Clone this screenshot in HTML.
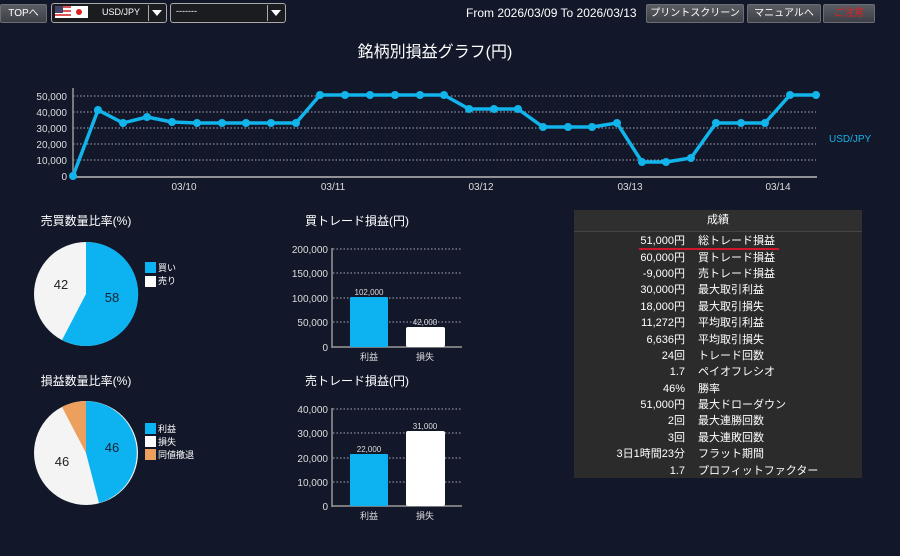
<!DOCTYPE html>
<html><head><meta charset="utf-8"><style>
body{margin:0;width:900px;height:556px;background:#121829;overflow:hidden;font-family:"Liberation Sans","Noto Sans CJK JP",sans-serif;color:#fff;position:relative}
.btn{position:absolute;top:4px;height:17px;background:linear-gradient(#5a5d63,#3d4046);border:1px solid #6a6d72;border-radius:2px;font-size:10px;line-height:17px;text-align:center;color:#fff}
.sel{position:absolute;top:3px;height:18px;border:1px solid #aaa;border-radius:3px;background:#1a1c20}
.arr{position:absolute;right:1px;top:1px;width:16px;height:16px;background:#1a1c20;border-left:1px solid #aaa}
.arr:after{content:"";position:absolute;left:3px;top:5px;border-left:5px solid transparent;border-right:5px solid transparent;border-top:6px solid #fff}
table{border-collapse:collapse}
td{height:16.4px;padding:0;line-height:16px;color:#fff}td:first-child{width:111px;text-align:right;padding-right:13px}
</style></head><body>
<div class="btn" style="left:0;width:45px">TOPへ</div>
<div class="sel" style="left:51px;width:114px">
 <div style="position:absolute;left:3px;top:2px;width:16px;height:12px;background:repeating-linear-gradient(#d55 0 2px,#fff 2px 4px)"><div style="width:8px;height:7px;background:#446"></div></div>
 <div style="position:absolute;left:19px;top:2px;width:17px;height:12px;background:#fff"><div style="position:absolute;left:5px;top:3px;width:6px;height:6px;border-radius:50%;background:#d22"></div></div>
 <div style="position:absolute;left:50px;top:3px;font-size:9px">USD/JPY</div>
 <div class="arr"></div></div>
<div class="sel" style="left:170px;width:114px"><div style="position:absolute;left:5px;top:2px;font-size:9px">-------</div><div class="arr"></div></div>
<div style="position:absolute;left:466px;top:6px;font-size:12px">From 2026/03/09 To 2026/03/13</div>
<div class="btn" style="left:646px;width:96px">プリントスクリーン</div>
<div class="btn" style="left:747px;width:72px">マニュアルへ</div>
<div class="btn" style="left:823px;width:50px;color:#e02020">ご注意</div>
<div style="position:absolute;left:0;width:870px;top:38px;text-align:center;font-size:16px">銘柄別損益グラフ(円)</div>

<svg width="900" height="556" style="position:absolute;left:0;top:0" font-family="Liberation Sans,Noto Sans CJK JP,sans-serif">
<g stroke="#aab" stroke-dasharray="1.5,2" stroke-width="1">
<line x1="73" x2="816" y1="96" y2="96"/><line x1="73" x2="816" y1="112" y2="112"/><line x1="73" x2="816" y1="128" y2="128"/><line x1="73" x2="816" y1="144" y2="144"/><line x1="73" x2="816" y1="160" y2="160"/>
</g>
<line x1="73" y1="88" x2="73" y2="177" stroke="#999" stroke-width="1.5"/>
<line x1="73" y1="177" x2="817" y2="177" stroke="#bbb" stroke-width="1.5"/>
<g fill="#ddd" font-size="10" text-anchor="end"><text x="67" y="100">50,000</text><text x="67" y="116">40,000</text><text x="67" y="132">30,000</text><text x="67" y="148">20,000</text><text x="67" y="164">10,000</text><text x="67" y="180">0</text></g>
<g fill="#ddd" font-size="10" text-anchor="middle"><text x="184" y="190">03/10</text><text x="333" y="190">03/11</text><text x="481" y="190">03/12</text><text x="630" y="190">03/13</text><text x="778" y="190">03/14</text></g>
<text x="829" y="142" fill="#19b1e8" font-size="10">USD/JPY</text>
<polyline fill="none" stroke="#12b4ec" stroke-width="3.5" stroke-linejoin="round" points="73,176 98,110 123,123 147,117 172,122 197,123 222,123 246,123 271,123 296,123 320,95 345,95 370,95 395,95 420,95 444,95 469,109 494,109 518,109 543,127 568,127 592,127 617,123 642,162 666,162 691,158 716,123 741,123 765,123 790,95 816,95"/>
<g fill="#12b4ec"><circle cx="73" cy="176" r="4"/><circle cx="98" cy="110" r="4"/><circle cx="123" cy="123" r="4"/><circle cx="147" cy="117" r="4"/><circle cx="172" cy="122" r="4"/><circle cx="197" cy="123" r="4"/><circle cx="222" cy="123" r="4"/><circle cx="246" cy="123" r="4"/><circle cx="271" cy="123" r="4"/><circle cx="296" cy="123" r="4"/><circle cx="320" cy="95" r="4"/><circle cx="345" cy="95" r="4"/><circle cx="370" cy="95" r="4"/><circle cx="395" cy="95" r="4"/><circle cx="420" cy="95" r="4"/><circle cx="444" cy="95" r="4"/><circle cx="469" cy="109" r="4"/><circle cx="494" cy="109" r="4"/><circle cx="518" cy="109" r="4"/><circle cx="543" cy="127" r="4"/><circle cx="568" cy="127" r="4"/><circle cx="592" cy="127" r="4"/><circle cx="617" cy="123" r="4"/><circle cx="642" cy="162" r="4"/><circle cx="666" cy="162" r="4"/><circle cx="691" cy="158" r="4"/><circle cx="716" cy="123" r="4"/><circle cx="741" cy="123" r="4"/><circle cx="765" cy="123" r="4"/><circle cx="790" cy="95" r="4"/><circle cx="816" cy="95" r="4"/></g>

<g font-size="12" text-anchor="middle" fill="#fff"><text x="86" y="225">売買数量比率(%)</text><text x="86" y="385">損益数量比率(%)</text>
<text x="357" y="225">買トレード損益(円)</text><text x="357" y="385">売トレード損益(円)</text></g>
<circle cx="86" cy="294" r="52" fill="#f4f4f4"/>
<path d="M86,294 L86,242 A52,52 0 1,1 62,340 Z" fill="#0db2f0"/>
<text x="112" y="302" font-size="13" fill="#123" text-anchor="middle">58</text>
<text x="61" y="289" font-size="13" fill="#222" text-anchor="middle">42</text>
<rect x="145" y="262" width="11" height="11" fill="#0db2f0"/><rect x="145" y="276" width="11" height="11" fill="#fff"/>
<g font-size="9" fill="#fff"><text x="158" y="271">買い</text><text x="158" y="284">売り</text></g>
<circle cx="86" cy="453" r="52" fill="#f4f4f4"/>
<path d="M86,453 L86,401 A52,52 0 0,1 99,503 Z" fill="#0db2f0"/>
<path d="M86,453 L86,401 A52,52 0 0,0 62,407 Z" fill="#eda05e"/>
<text x="112" y="452" font-size="13" fill="#123" text-anchor="middle">46</text>
<text x="62" y="466" font-size="13" fill="#222" text-anchor="middle">46</text>
<rect x="145" y="423" width="11" height="11" fill="#0db2f0"/><rect x="145" y="436" width="11" height="11" fill="#fff"/><rect x="145" y="449" width="11" height="11" fill="#eda05e"/>
<g font-size="9" fill="#fff"><text x="158" y="432">利益</text><text x="158" y="445">損失</text><text x="158" y="458">同値撤退</text></g>

<g stroke="#aab" stroke-dasharray="1.5,2"><line x1="333" x2="462" y1="249" y2="249"/><line x1="333" x2="462" y1="273" y2="273"/><line x1="333" x2="462" y1="298" y2="298"/><line x1="333" x2="462" y1="322" y2="322"/>
<line x1="333" x2="462" y1="409" y2="409"/><line x1="333" x2="462" y1="433" y2="433"/><line x1="333" x2="462" y1="458" y2="458"/><line x1="333" x2="462" y1="482" y2="482"/></g>
<g stroke="#999" stroke-width="1.5"><line x1="332" y1="248" x2="332" y2="348"/><line x1="332" y1="347" x2="462" y2="347"/><line x1="332" y1="408" x2="332" y2="507"/><line x1="332" y1="506" x2="462" y2="506"/></g>
<g fill="#ddd" font-size="10" text-anchor="end"><text x="328" y="253">200,000</text><text x="328" y="277">150,000</text><text x="328" y="302">100,000</text><text x="328" y="326">50,000</text><text x="328" y="351">0</text>
<text x="328" y="413">40,000</text><text x="328" y="437">30,000</text><text x="328" y="462">20,000</text><text x="328" y="486">10,000</text><text x="328" y="510">0</text></g>
<rect x="350" y="297" width="38" height="50" fill="#0db2f0" rx="1"/><rect x="406" y="327" width="39" height="20" fill="#fff" rx="2"/>
<rect x="350" y="454" width="38" height="52" fill="#0db2f0" rx="1"/><rect x="406" y="431" width="39" height="75" fill="#fff" rx="2"/>
<g fill="#ddd" font-size="8" text-anchor="middle"><text x="369" y="295">102,000</text><text x="425" y="325">42,000</text><text x="369" y="452">22,000</text><text x="425" y="429">31,000</text></g>
<g fill="#ddd" font-size="9" text-anchor="middle"><text x="369" y="360">利益</text><text x="425" y="360">損失</text><text x="369" y="519">利益</text><text x="425" y="519">損失</text></g>
</svg>

<div style="position:absolute;left:574px;top:210px;width:288px;height:268px;background:#2b2b2b;font-size:11px">
<div style="height:21px;line-height:21px;text-align:center;background:#2f2f2f;border-bottom:1px solid #444">成績</div>
<table style="margin-top:1px;width:288px">
<tr><td>51,000円</td><td>総トレード損益</td></tr>
<tr><td>60,000円</td><td>買トレード損益</td></tr>
<tr><td>-9,000円</td><td>売トレード損益</td></tr>
<tr><td>30,000円</td><td>最大取引利益</td></tr>
<tr><td>18,000円</td><td>最大取引損失</td></tr>
<tr><td>11,272円</td><td>平均取引利益</td></tr>
<tr><td>6,636円</td><td>平均取引損失</td></tr>
<tr><td>24回</td><td>トレード回数</td></tr>
<tr><td>1.7</td><td>ペイオフレシオ</td></tr>
<tr><td>46%</td><td>勝率</td></tr>
<tr><td>51,000円</td><td>最大ドローダウン</td></tr>
<tr><td>2回</td><td>最大連勝回数</td></tr>
<tr><td>3回</td><td>最大連敗回数</td></tr>
<tr><td>3日1時間23分</td><td>フラット期間</td></tr>
<tr><td>1.7</td><td>プロフィットファクター</td></tr>
</table>
<div style="position:absolute;left:65px;top:38px;width:140px;height:2px;background:#d0182a"></div>
</div>
</body></html>
